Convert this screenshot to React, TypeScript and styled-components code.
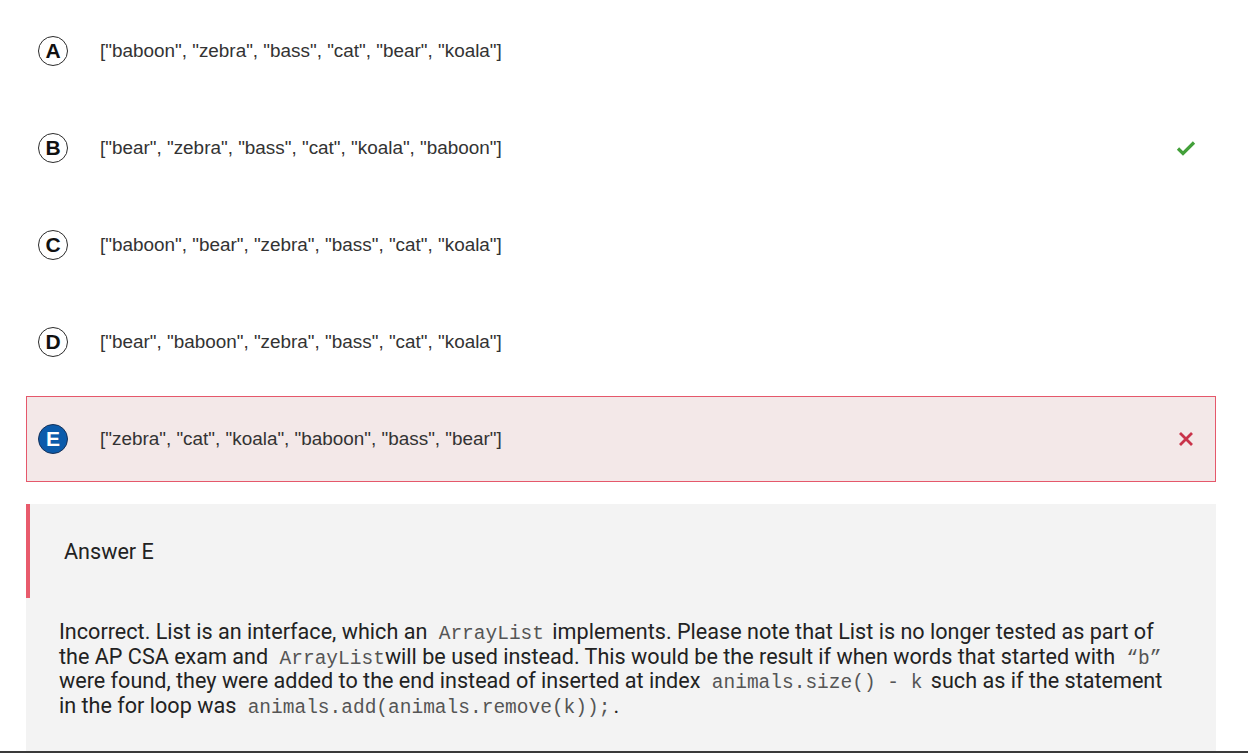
import * as React from 'react';
import styled, { createGlobalStyle } from 'styled-components';

interface Option {
    letter: string;
    text: string;
    status?: 'correct' | 'wrong';
}

const options: Option[] = [
    { letter: 'A', text: '["baboon", "zebra", "bass", "cat", "bear", "koala"]' },
    { letter: 'B', text: '["bear", "zebra", "bass", "cat", "koala", "baboon"]', status: 'correct' },
    { letter: 'C', text: '["baboon", "bear", "zebra", "bass", "cat", "koala"]' },
    { letter: 'D', text: '["bear", "baboon", "zebra", "bass", "cat", "koala"]' },
    { letter: 'E', text: '["zebra", "cat", "koala", "baboon", "bass", "bear"]', status: 'wrong' },
];

const GlobalStyle = createGlobalStyle`
    html, body {
        margin: 0;
        padding: 0;
        background: #ffffff;
        overflow: hidden;
    }
    body {
        margin: 8px;
    }
`;

const CheckIcon = () => (
    <svg width="20" height="16" viewBox="0 0 20 16">
        <path d="M2 8.5 L7 13.5 L18 2.5" fill="none" stroke="#43a03a" strokeWidth="3.2" strokeLinecap="butt" />
    </svg>
);

const CrossIcon = () => (
    <svg width="16" height="16" viewBox="0 0 16 16">
        <path d="M2 2 L14 14 M14 2 L2 14" fill="none" stroke="#c9334a" strokeWidth="2.8" />
    </svg>
);

export default function App() {
    return (
        <Page>
            <GlobalStyle />
            <OptionList>
                {options.map(o => (
                    <Row key={o.letter} wrong={o.status === 'wrong'}>
                        <Badge selected={o.status === 'wrong'}>{o.letter}</Badge>
                        <OptionText>{o.text}</OptionText>
                        <Mark>
                            {o.status === 'correct' && <CheckIcon />}
                            {o.status === 'wrong' && <CrossIcon />}
                        </Mark>
                    </Row>
                ))}
            </OptionList>
            <Feedback>
                <FeedbackHead>Answer E</FeedbackHead>
                <Explanation>
                    Incorrect. List is an interface, which an <Code>ArrayList</Code> implements. Please note that List is
                    no longer tested as part of the AP CSA exam and <Code tight>ArrayList</Code>will be used instead. This
                    would be the result if when words that started with <Code>“b”</Code> were found, they were added to the
                    end instead of inserted at index <Code>animals.size() - k</Code> such as if the statement in the for loop
                    was <Code>animals.add(animals.remove(k));</Code>.
                </Explanation>
            </Feedback>
            <BottomEdge />
        </Page>
    );
}

const Page = styled.div`
    padding: 0 24px 0 18px;
    font-family: 'Liberation Sans', Arial, sans-serif;
`;

const OptionList = styled.div`
    display: flex;
    flex-direction: column;
    gap: 11px;
`;

const Row = styled.div<{ wrong: boolean }>`
    display: flex;
    align-items: center;
    height: 86px;
    box-sizing: border-box;
    padding: 0 17px 0 11px;
    border: 1px solid ${props => (props.wrong ? '#e5586b' : 'transparent')};
    background: ${props => (props.wrong ? '#f3e8e8' : 'transparent')};
`;

const Badge = styled.div<{ selected: boolean }>`
    width: 30px;
    height: 30px;
    box-sizing: border-box;
    border-radius: 50%;
    border: 1.5px solid ${props => (props.selected ? '#16325a' : '#2b2b2b')};
    background: ${props => (props.selected ? '#0b5bab' : '#ffffff')};
    color: ${props => (props.selected ? '#ffffff' : '#111111')};
    display: flex;
    align-items: center;
    justify-content: center;
    font-family: 'Liberation Sans', Arial, sans-serif;
    font-weight: 700;
    font-size: 21px;
    flex-shrink: 0;
`;

const OptionText = styled.div`
    margin-left: 32px;
    flex: 1;
    font-size: 18.9px;
    color: #333333;
`;

const Mark = styled.div`
    width: 24px;
    display: flex;
    align-items: center;
    justify-content: center;
`;

const Feedback = styled.div`
    margin-top: 22px;
    background: #f3f3f3;
    min-height: 260px;
    font-family: Roboto, 'Liberation Sans', sans-serif;
    color: #222222;
`;

const FeedbackHead = styled.div`
    height: 94px;
    box-sizing: border-box;
    border-left: 4px solid #e85b6c;
    padding-left: 34px;
    display: flex;
    align-items: center;
    font-size: 21.6px;
`;

const Explanation = styled.p`
    margin: 22px 0 0;
    padding: 0 34px 0 33px;
    font-size: 21.6px;
    line-height: 24.5px;
`;

const Code = styled.code<{ tight?: boolean }>`
    font-family: 'Liberation Mono', 'Courier New', monospace;
    font-size: 19.5px;
    line-height: 1;
    color: #555555;
    padding: ${props => (props.tight ? '0 0 0 6px' : '0 3px 0 6px')};
`;

const BottomEdge = styled.div`
    position: fixed;
    left: 0;
    right: 0;
    bottom: 0;
    height: 2px;
    background: #3a3a3a;
`;
